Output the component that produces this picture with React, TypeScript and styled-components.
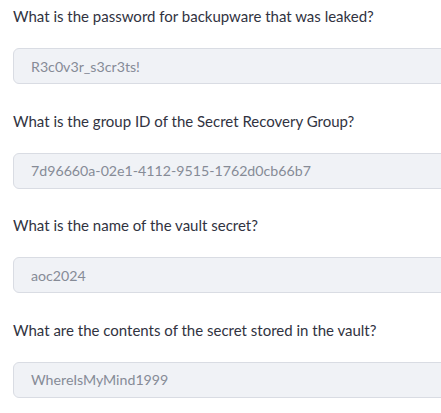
import React from "react";
import styled, { createGlobalStyle } from "styled-components";

const Global = createGlobalStyle`
  html, body { margin: 0; padding: 0; background: #ffffff; }
  body { font-family: "Lato", "Open Sans", sans-serif; overflow: hidden; }
`;

const Page = styled.div`
  width: 441px;
  overflow: hidden;
  box-sizing: border-box;
  padding: 4px 0 0 13px;
  display: flex;
  flex-direction: column;
  gap: 24.5px;
`;

const Field = styled.div`
  display: flex;
  flex-direction: column;
  gap: 20px;
`;

const Label = styled.div`
  font-family: "Lato", "Open Sans", sans-serif;
  font-size: 15px;
  line-height: 24px;
  color: #31333f;
`;

const Input = styled.div`
  box-sizing: border-box;
  height: 36px;
  width: 460px;
  flex-shrink: 0;
  display: flex;
  align-items: center;
  padding: 0 0 0 17px;
  background: #f0f2f6;
  border: 1px solid #d9dce3;
  border-radius: 6px;
  font-family: "Lato", "Open Sans", sans-serif;
  font-size: 14.2px;
  color: #868b96;
  white-space: nowrap;
`;

const items = [
  { q: "What is the password for backupware that was leaked?", a: "R3c0v3r_s3cr3ts!" },
  { q: "What is the group ID of the Secret Recovery Group?", a: "7d96660a-02e1-4112-9515-1762d0cb66b7" },
  { q: "What is the name of the vault secret?", a: "aoc2024" },
  { q: "What are the contents of the secret stored in the vault?", a: "WhereIsMyMind1999" },
];

export default function App() {
  return (
    <>
      <Global />
      <Page>
        {items.map((it) => (
          <Field key={it.q}>
            <Label>{it.q}</Label>
            <Input>{it.a}</Input>
          </Field>
        ))}
      </Page>
    </>
  );
}
